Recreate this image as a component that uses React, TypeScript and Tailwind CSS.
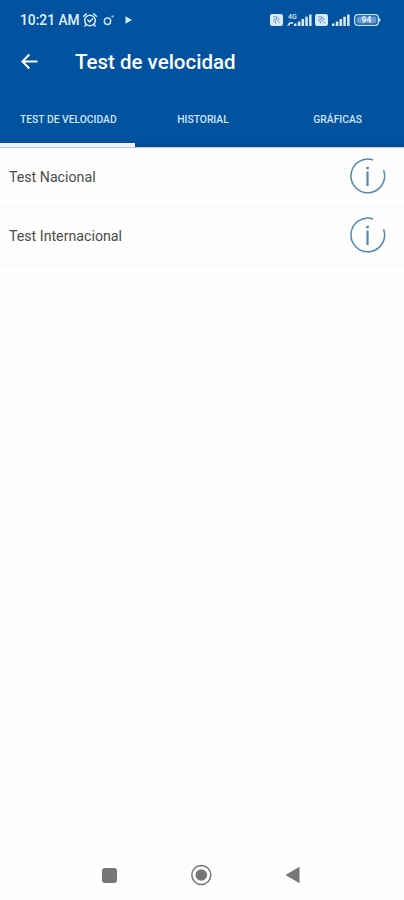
import React from "react";

const tabs = ["TEST DE VELOCIDAD", "HISTORIAL", "GRÁFICAS"];
const tests = ["Test Nacional", "Test Internacional"];

function AlarmIcon() {
  return (
    <svg width="16" height="16" viewBox="0 0 16 16" fill="none" stroke="#d9ecfb" strokeWidth="1.500" strokeLinecap="round">
      <circle cx="8" cy="8.500" r="5.300" />
      <path d="M1.600 4.200 4.300 1.900M14.400 4.200 11.700 1.900M3.900 12.800 2.900 14M12.100 12.800l1 1.200M5.800 8l1.800 1.900 2.800-3" />
    </svg>
  );
}

function StatusGlyphs() {
  return (
    <svg width="44" height="16" viewBox="102 12 44 16">
      <circle cx="107.500" cy="21.300" r="3.200" fill="none" stroke="#c6e0f6" strokeWidth="1.500" />
      <rect x="111.500" y="15.500" width="2" height="2" fill="#a9cdec" />
      <path d="M125.500 16.300v7.400l6.500-3.700z" fill="#d4eafa" />
    </svg>
  );
}

function VoIcon() {
  return (
    <svg width="13" height="12" viewBox="0 0 13 12" fill="none">
      <rect width="13" height="12" rx="2.200" fill="#d9ebfa" />
      <path d="M3 2.800h3.500v2.500H3.500M6.500 5.300 10 9.500M3 7h2.500v2.500M7.500 3 9.500 6" stroke="#6b9bca" strokeWidth="1" />
    </svg>
  );
}

function Signal({ network }: { network?: boolean }) {
  return (
    <svg width="26" height="14" viewBox="0 0 26 14" fill="#d9ebfa">
      {network && (
        <>
          <text x="1" y="6" fontFamily="Roboto, sans-serif" fontSize="7" fontWeight="500" fill="#d9ebfa">4G</text>
          <path d="M0 12.500 2.800 8.700v3.800zM3.300 9h3l-1 2h-2z" />
        </>
      )}
      <rect x="7" y="10.500" width="2.500" height="2.500" />
      <rect x="10.800" y="8.500" width="2.600" height="4.500" />
      <rect x="14.500" y="6" width="2.600" height="7" />
      <rect x="18.300" y="3.700" width="2.500" height="9.300" />
      <rect x="22.100" y="1.500" width="2.500" height="11.500" />
    </svg>
  );
}

function Battery() {
  return (
    <svg width="28" height="12" viewBox="0 0 28 12">
      <rect x=".7" y=".7" width="23.600" height="10.600" rx="3" fill="none" stroke="#c9e1f6" strokeWidth="1.300" />
      <rect x="2.600" y="2.600" width="19.800" height="6.800" rx="1.400" fill="#649ad0" />
      <path d="M25 4c2 .3 2 3.700 0 4z" fill="#c9e1f6" />
      <text x="12.500" y="9" textAnchor="middle" fontFamily="Roboto, sans-serif" fontWeight="700" fontSize="8.500" fill="#e3f1fc">94</text>
    </svg>
  );
}

function InfoIcon() {
  return (
    <svg className="mb-[2px]" width="38" height="38" viewBox="0 0 38 38" fill="none" stroke="#5288ae">
      <path d="M24 3A16.800 16.800 0 1 0 34.600 13.300" strokeWidth="1.500" />
      <path d="M18.500 14.500v14.500" strokeWidth="2.200" />
      <path d="M18.500 9.800v2.500" strokeWidth="2.500" />
    </svg>
  );
}

export default function App() {
  return (
    <div className="flex h-[900px] w-[404px] flex-col overflow-hidden bg-[#fefefe] font-['Roboto',sans-serif]">
      <header className="flex h-[147px] shrink-0 flex-col bg-[#0153a0] text-white">
        <div className="flex h-10 items-center pr-[22px] pl-5 text-[#e2f1fd]">
          <span className="w-[62px] text-[13.800px] font-medium whitespace-nowrap">10:21 AM</span>
          <AlarmIcon />
          <span className="ml-1"><StatusGlyphs /></span>
          <div className="ml-auto flex items-center">
            <VoIcon />
            <span className="ml-1"><Signal network /></span>
            <span className="ml-[2px]"><VoIcon /></span>
            <span className="-ml-[3px]"><Signal /></span>
            <span className="ml-[3px]"><Battery /></span>
          </div>
        </div>
        <div className="flex h-[44px] items-center pl-5">
          <svg width="20" height="18" viewBox="0 0 20 18" fill="none" stroke="#f4faff" strokeWidth="2.100">
            <path d="M17.500 8.500H2.500M9.300 1.500 2.500 8.500l6.800 7" />
          </svg>
          <h1 className="ml-[35px] text-[20.500px] leading-[24px] font-medium">Test de velocidad</h1>
        </div>
        <nav className="grid flex-1 grid-cols-3">
          {tabs.map((tab, i) => (
            <button key={tab} className={`flex items-start justify-center border-b-4 pt-[28px] pl-[2px] text-[10.300px] leading-[16px] font-medium whitespace-nowrap text-[#cfe5fa] ${i === 0 ? "border-[#f0f2f8]" : "border-[#014c99]"}`}>
              {tab}
            </button>
          ))}
        </nav>
      </header>
      <main className="flex-1 border-t border-[#c3cad6]">
        {tests.map((test) => (
          <div key={test} className="flex h-[59px] items-center justify-between border-b border-[#f5f5f5] pr-[17px] pl-[9px] text-[14.200px] text-[#4b4b4b]">
            <span className="pt-[2px]">{test}</span>
            <InfoIcon />
          </div>
        ))}
      </main>
      <footer className="flex h-[50px] shrink-0 items-center pl-[102px]">
        <span className="h-[15px] w-[15px] rounded-[3px] bg-[#777]" />
        <svg className="ml-[73px]" width="22" height="22" viewBox="0 0 22 22">
          <circle cx="11.300" cy="11" r="9.500" fill="none" stroke="#777" strokeWidth="1.500" />
          <circle cx="11.300" cy="11" r="5.800" fill="#777" />
        </svg>
        <svg className="ml-[73px]" width="15" height="18" viewBox="0 0 15 18">
          <path d="M.5 9 14.500 .7v16.600z" fill="#777" />
        </svg>
      </footer>
    </div>
  );
}
